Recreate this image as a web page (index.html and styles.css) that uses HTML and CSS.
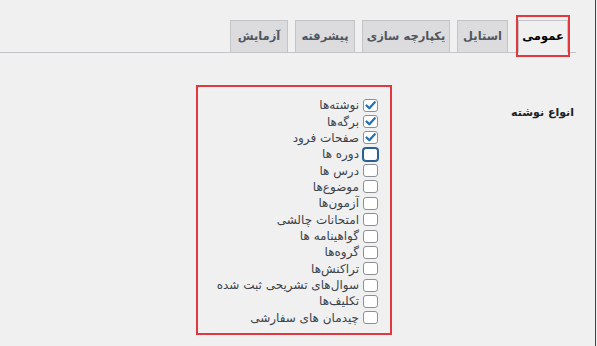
FILE: index.html
```html
<!DOCTYPE html>
<html lang="fa" dir="rtl">
<head>
<meta charset="utf-8">
<link rel="stylesheet" href="styles.css">
</head>
<body>
<div class="frame">
  <nav class="tabs">
    <a class="tab active tab-general">عمومی</a>
    <a class="tab tab-style">استایل</a>
    <a class="tab tab-integration">یکپارچه سازی</a>
    <a class="tab tab-advanced">پیشرفته</a>
    <a class="tab tab-test">آزمایش</a>
  </nav>
  <div class="row">
    <div class="label">انواع نوشته</div>
    <div class="box">
      <label class="item"><span class="cb"><svg viewBox="0 0 15 13" width="15" height="13"><path d="M3.5 6.5 L6.3 9.3 L11.8 3.2" fill="none" stroke="#2271b1" stroke-width="2.2" stroke-linecap="round" stroke-linejoin="round"/></svg></span><span class="txt">نوشته‌ها</span></label>
      <label class="item"><span class="cb"><svg viewBox="0 0 15 13" width="15" height="13"><path d="M3.5 6.5 L6.3 9.3 L11.8 3.2" fill="none" stroke="#2271b1" stroke-width="2.2" stroke-linecap="round" stroke-linejoin="round"/></svg></span><span class="txt">برگه‌ها</span></label>
      <label class="item"><span class="cb"><svg viewBox="0 0 15 13" width="15" height="13"><path d="M3.5 6.5 L6.3 9.3 L11.8 3.2" fill="none" stroke="#2271b1" stroke-width="2.2" stroke-linecap="round" stroke-linejoin="round"/></svg></span><span class="txt">صفحات فرود</span></label>
      <label class="item"><span class="cb focus"></span><span class="txt">دوره ها</span></label>
      <label class="item"><span class="cb"></span><span class="txt">درس ها</span></label>
      <label class="item"><span class="cb"></span><span class="txt">موضوع‌ها</span></label>
      <label class="item"><span class="cb"></span><span class="txt">آزمون‌ها</span></label>
      <label class="item"><span class="cb"></span><span class="txt">امتحانات چالشی</span></label>
      <label class="item"><span class="cb"></span><span class="txt">گواهینامه ها</span></label>
      <label class="item"><span class="cb"></span><span class="txt">گروه‌ها</span></label>
      <label class="item"><span class="cb"></span><span class="txt">تراکنش‌ها</span></label>
      <label class="item"><span class="cb"></span><span class="txt">سوال‌های تشریحی ثبت شده</span></label>
      <label class="item"><span class="cb"></span><span class="txt">تکلیف‌ها</span></label>
      <label class="item"><span class="cb"></span><span class="txt">چیدمان های سفارشی</span></label>
    </div>
  </div>
</div>
</body>
</html>
```
FILE: styles.css
```css
html, body {
  margin: 0;
  padding: 0;
  background: #f0f0f1;
  height: 100%;
}
body {
  direction: rtl;
  font-family: "DejaVu Sans", "Noto Sans", sans-serif;
  color: #3c434a;
}
.frame {
  margin-right: 1px;
  border-right: 1px solid #3c434a;
  min-height: 346px;
  box-sizing: border-box;
}
.tabs {
  display: flex;
  align-items: flex-end;
  gap: 7px;
  padding: 20px 8px 0 0;
  margin-right: 19px;
  border-bottom: 1px solid #c3c4c7;
  height: 32px;
}
.tab {
  position: relative;
  display: block;
  box-sizing: border-box;
  height: 33px;
  line-height: 31px;
  text-align: center;
  margin-bottom: -1px;
  border: 1px solid #c3c4c7;
  background: #dcdcde;
  color: #50575e;
  font-size: 11.5px;
  font-weight: bold;
  white-space: nowrap;
}
.tab-general { width: 50px; margin-left: 3px; }
.tab-style { width: 51px; }
.tab-integration { width: 88px; }
.tab-advanced { width: 60px; }
.tab-test { width: 58px; }
.tab.active {
  background: #f0f0f1;
  border-bottom-color: #f0f0f1;
  color: #000;
}
.tab.active::after {
  content: "";
  position: absolute;
  top: -6px;
  bottom: -5px;
  left: -3px;
  right: -3px;
  border: 2px solid #e0383e;
}
.row {
  display: flex;
  align-items: flex-start;
  margin-top: 32px;
  padding-right: 21px;
}
.label {
  flex: 0 0 182px;
  padding-top: 20px;
  line-height: 16px;
  font-size: 11px;
  font-weight: bold;
  color: #1d2327;
}
.box {
  width: 196px;
  box-sizing: border-box;
  border: 2px solid #e0383e;
  padding: 10px 12px 7px 12px;
}
.item {
  display: flex;
  align-items: center;
  gap: 4px;
  height: 16.36px;
  font-size: 12px;
  white-space: nowrap;
}
.cb {
  flex: 0 0 auto;
  width: 15px;
  height: 13px;
  box-sizing: border-box;
  border: 1px solid #8c8f94;
  border-radius: 3px;
  background: #fff;
  position: relative;
}
.cb svg {
  position: absolute;
  top: -1px;
  right: -1px;
}
.cb.focus {
  border-color: #2c5f8e;
  box-shadow: 0 0 0 1px #2c5f8e;
}
.txt {
  line-height: 16px;
}
```
